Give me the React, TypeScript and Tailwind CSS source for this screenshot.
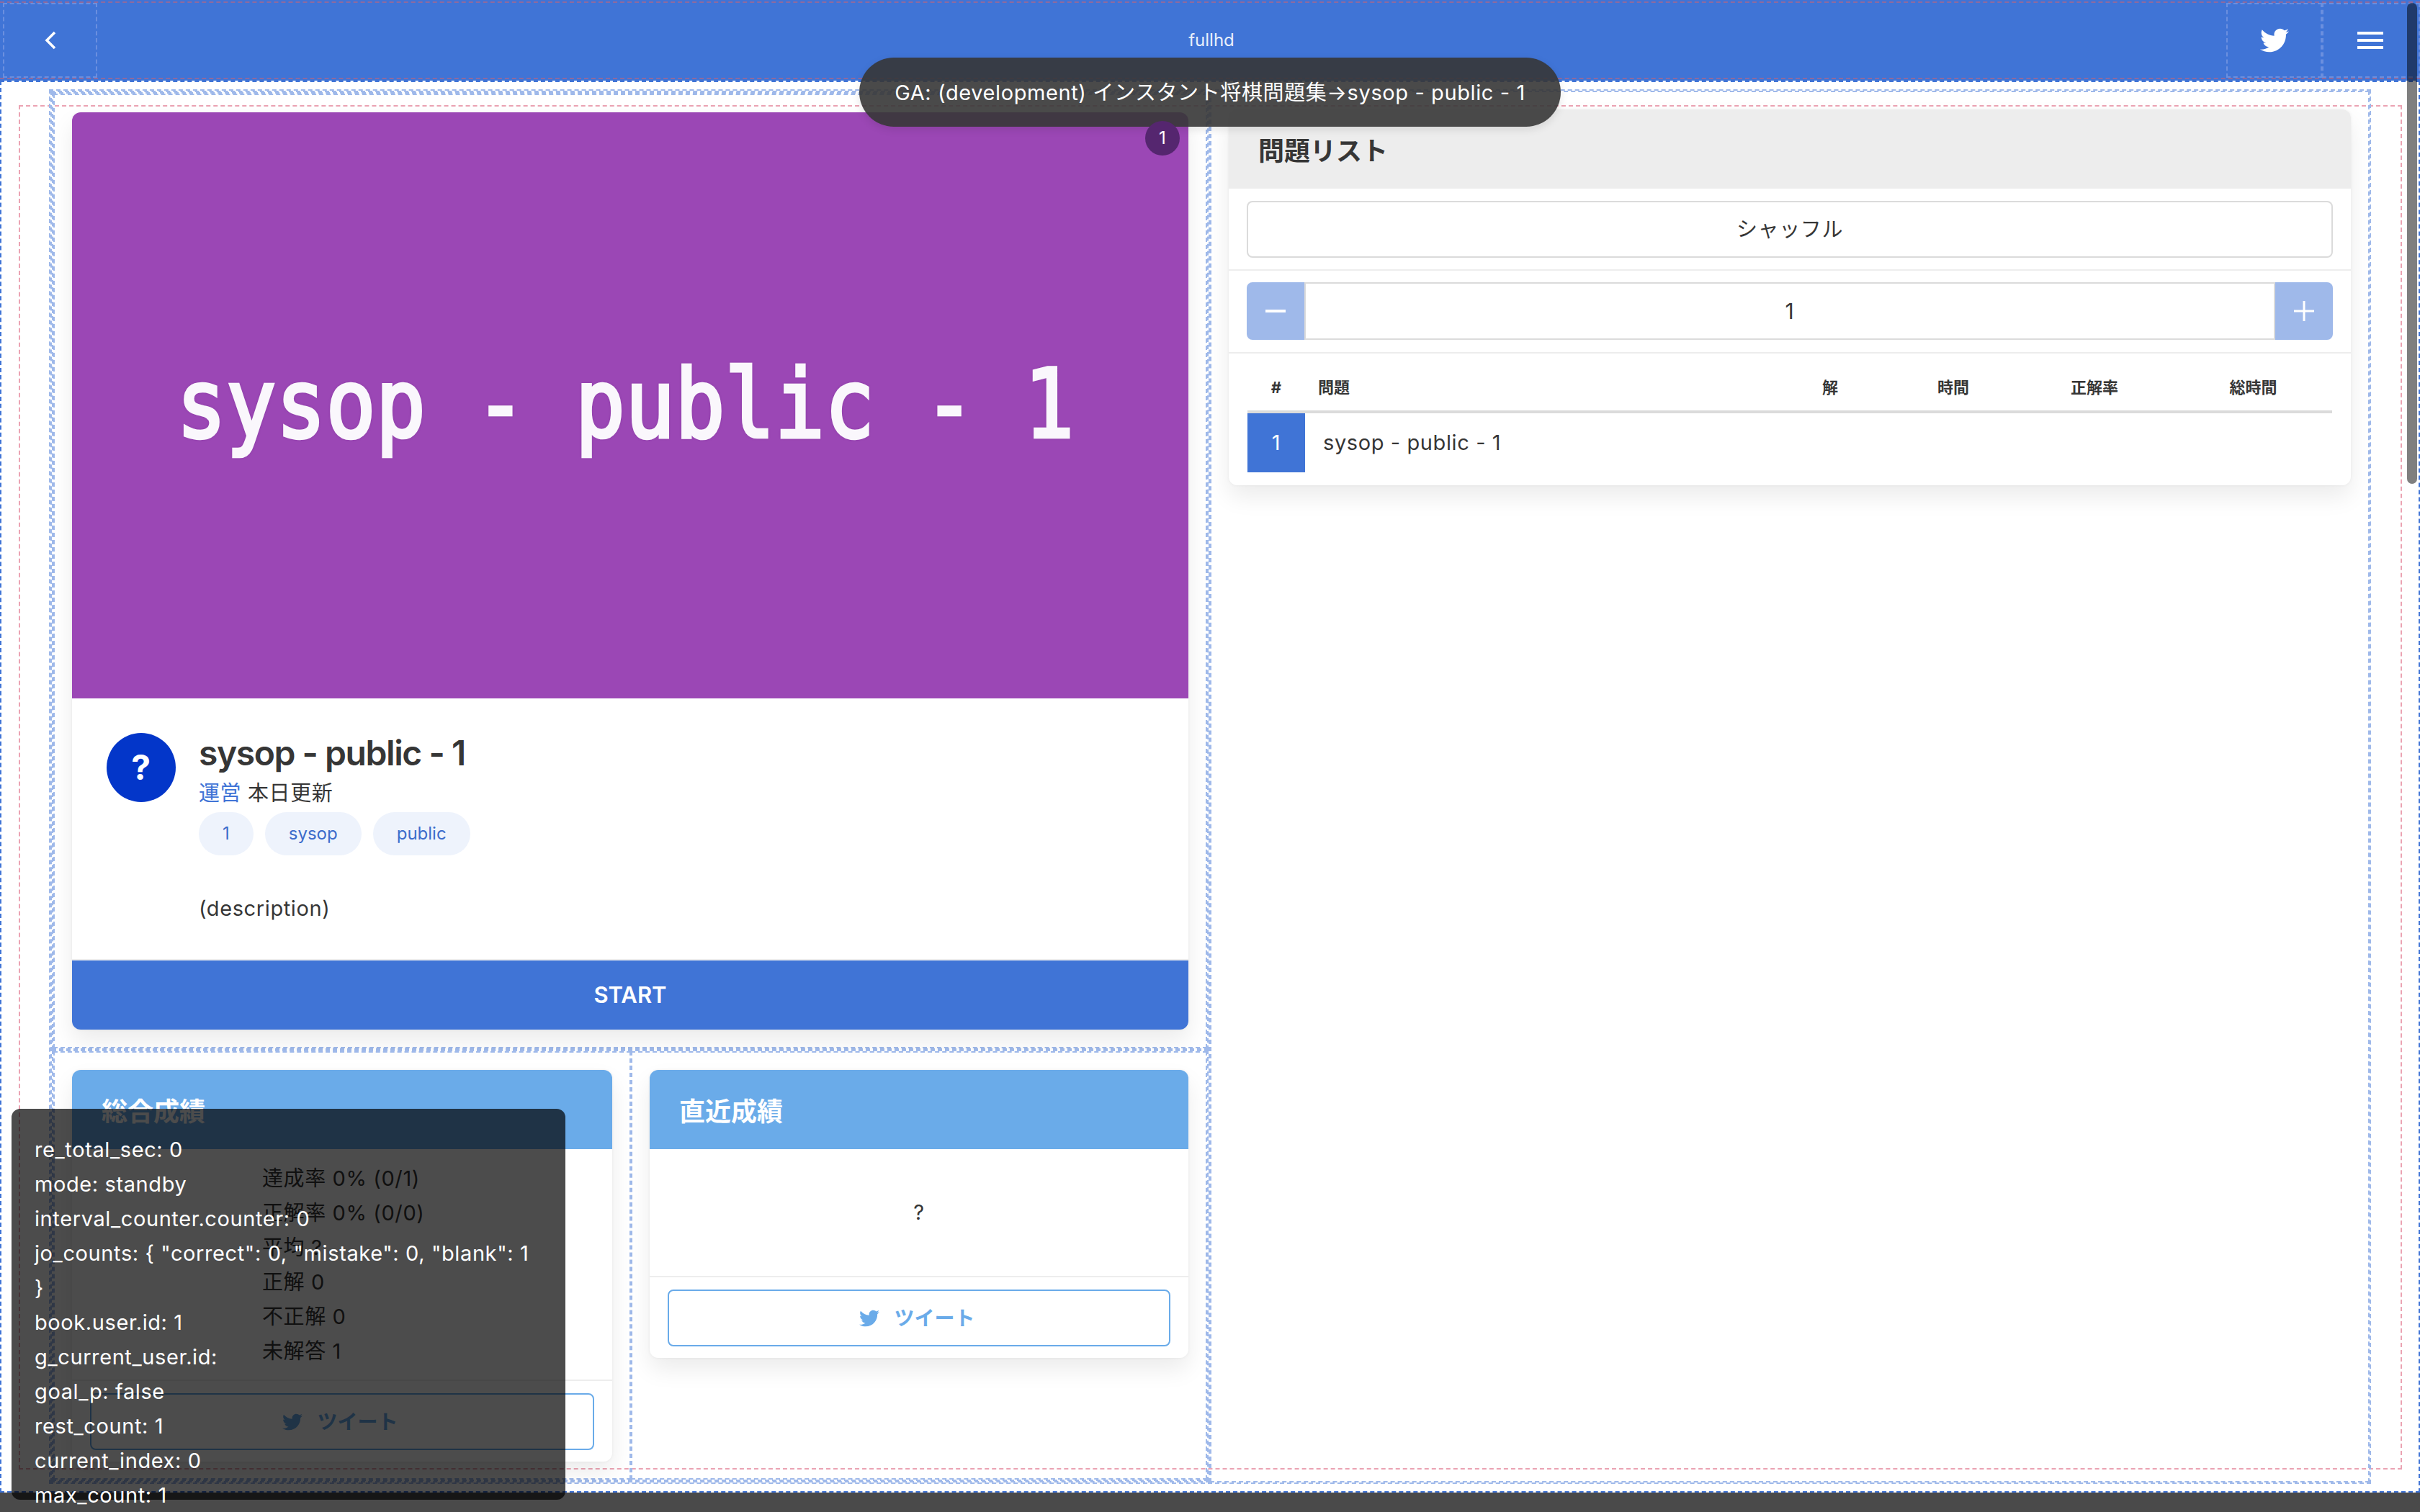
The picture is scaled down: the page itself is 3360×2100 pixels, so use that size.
import { FaTwitter } from "react-icons/fa";

const DEBUG = [
  "re_total_sec: 0",
  "mode: standby",
  "interval_counter.counter: 0",
  'jo_counts: { "correct": 0, "mistake": 0, "blank": 1 }',
  "book.user.id: 1",
  "g_current_user.id:",
  "goal_p: false",
  "rest_count: 1",
  "current_index: 0",
  "max_count: 1",
];

const STATS = ["達成率 0% (0/1)", "正解率 0% (0/0)", "平均 ?", "正解 0", "不正解 0", "未解答 1"];

function TweetFooter() {
  return (
    <div className="h-[114px] border-t-2 border-[#ededed] px-[25px] pt-[17px]">
      <div className="flex h-[79px] items-center justify-center gap-[20px] rounded-[8px] border-2 border-[#6aabe9] pr-[5px] text-[28px] font-bold tracking-normal text-[#6aabe9]">
        <FaTwitter className="h-[28px] w-[28px]" />
        <span>ツイート</span>
      </div>
    </div>
  );
}

function StatCard({ title, children }: { title: string; children: React.ReactNode }) {
  return (
    <div className="overflow-hidden rounded-[12px] bg-white shadow-[0_16px_32px_rgba(0,0,0,0.08),0_0_4px_rgba(0,0,0,0.06)]">
      <div className="flex h-[110px] items-center bg-[#6aabe9] pl-[41px] pt-[5px] text-[36px] font-bold tracking-normal text-white">{title}</div>
      {children}
    </div>
  );
}

export default function App() {
  return (
    <div className="relative flex h-[2100px] w-[3360px] flex-col overflow-hidden bg-[#4a4a4a] font-['Inter','Noto_Sans_CJK_JP',sans-serif] text-[29px] tracking-[0.6px] text-[#363636]">
      {/* navbar */}
      <header className="h-[112px] shrink-0 bg-[#4074d6] py-[2px]">
        <div className="flex h-[108px] items-stretch border-y-2 border-dashed border-[#8e6a9f]">
          <div className="flex flex-1 pl-[4px]">
            <div className="flex w-[131px] items-center justify-center border-2 border-dashed border-[#6b8fdf]">
              <svg width="16" height="26" viewBox="0 0 16 26" fill="none" stroke="white" strokeWidth="3.5">
                <path d="M14 2 L3 13 L14 24" />
              </svg>
            </div>
          </div>
          <div className="flex items-center text-[24px] tracking-normal text-[#e8eefa]">fullhd</div>
          <div className="flex flex-1 justify-end">
            <div className="flex w-[133px] items-center justify-center border-2 border-dashed border-[#6b8fdf]">
              <FaTwitter className="h-[40px] w-[40px] text-white" />
            </div>
            <div className="flex w-[136px] flex-col items-center justify-center gap-[6px] border-2 border-dashed border-[#6b8fdf] pr-[2px]">
              <span className="h-[4px] w-[36px] bg-white" />
              <span className="h-[4px] w-[36px] bg-white" />
              <span className="h-[4px] w-[36px] bg-white" />
            </div>
          </div>
        </div>
      </header>

      {/* page */}
      <main className="shrink-0 border-2 border-dashed border-[#4074d6] bg-white pb-[30px] pl-[24px] pr-[23px] pt-[32px]">
        <section className="border-2 border-dashed border-[#eba3b3]">
          <div className="ml-[40px] mr-[41px] mt-[-24px] mb-[-22px] flex border-2 border-dashed border-[#9fb9ea]">
            {/* left column */}
            <div className="w-[1610px] shrink-0 border-2 border-dashed border-[#9fb9ea]">
              <div className="border-2 border-dashed border-[#9fb9ea]">
                <div className="border-2 border-dashed border-[#9fb9ea] p-[24px]">
                  <div className="overflow-hidden rounded-[12px] bg-white shadow-[0_16px_32px_rgba(0,0,0,0.08),0_0_4px_rgba(0,0,0,0.06)]">
                    <div className="flex h-[814px] items-center justify-center bg-[#9b47b5]">
                      <span className="mr-[14px] mt-[-4px] scale-y-[1.14] font-['DejaVu_Sans_Mono',monospace] text-[115px] tracking-normal text-[#faf7fc] [-webkit-text-stroke:4px_#faf7fc] [text-shadow:0_0_4px_rgba(80,20,100,0.5)]">
                        sysop - public - 1
                      </span>
                    </div>
                    <div className="flex h-[362px] gap-[32px] pl-[48px] pt-[48px]">
                      <div className="flex h-[96px] w-[96px] items-center justify-center rounded-full bg-[#0336c9] text-[48px] font-bold text-white">?</div>
                      <div>
                        <div className="mb-[6px] mt-[-2px] text-[48px] font-semibold leading-[60px] tracking-[-1.45px]">sysop - public - 1</div>
                        <div className="mb-[6px] leading-[40px]">
                          <span className="text-[#4074d6]">運営</span> 本日更新
                        </div>
                        <div className="flex gap-[16px]">
                          {["1", "sysop", "public"].map((t) => (
                            <span key={t} className="flex h-[60px] items-center rounded-[30px] bg-[#eef3fc] px-[33px] text-[24px] tracking-normal text-[#3c6ccb]">
                              {t}
                            </span>
                          ))}
                        </div>
                        <div className="mt-[54px] leading-[40px]">(description)</div>
                      </div>
                    </div>
                    <div className="flex h-[98px] items-center justify-center border-t-2 border-[#ededed] bg-[#4074d6] text-[31px] font-semibold tracking-normal text-white">START</div>
                  </div>
                </div>
              </div>
              <div className="flex items-start border-2 border-dashed border-[#9fb9ea]">
                <div className="w-[802px] shrink-0 border-2 border-dashed border-[#9fb9ea] px-[24px] pb-[23px] pt-[24px]">
                  <StatCard title="総合成績">
                    <div className="h-[320px] pl-[264px] pt-[17px] leading-[48px]">
                      {STATS.map((s) => (
                        <div key={s}>{s}</div>
                      ))}
                    </div>
                    <TweetFooter />
                  </StatCard>
                </div>
                <div className="min-w-0 flex-1 self-stretch border-2 border-dashed border-[#9fb9ea] px-[24px] pt-[24px]">
                  <StatCard title="直近成績">
                    <div className="flex h-[176px] items-center justify-center">?</div>
                    <TweetFooter />
                  </StatCard>
                </div>
              </div>
            </div>
            {/* right column */}
            <div className="min-w-0 flex-1 border-2 border-dashed border-[#9fb9ea] p-[24px]">
              <div className="overflow-hidden rounded-[12px] bg-white shadow-[0_16px_32px_rgba(0,0,0,0.08),0_0_4px_rgba(0,0,0,0.06)]">
                <div className="flex h-[110px] items-center bg-[#ededed] pl-[41px] pt-[5px] text-[36px] font-bold tracking-normal">問題リスト</div>
                <div className="h-[114px] border-b-2 border-[#ededed] px-[25px] pt-[17px]">
                  <div className="flex h-[79px] items-center justify-center rounded-[8px] border-2 border-[#dbdbdb]">シャッフル</div>
                </div>
                <div className="h-[115px] border-b-2 border-[#ededed] px-[25px] pt-[16px]">
                  <div className="flex h-[80px]">
                    <div className="flex w-[80px] items-center justify-center rounded-l-[8px] bg-[#9fb9ea]">
                      <svg width="28" height="28" viewBox="0 0 28 28" fill="white"><rect x="0" y="12" width="28" height="4" /></svg>
                    </div>
                    <div className="flex flex-1 items-center justify-center border-2 border-[#dbdbdb] text-[30px]">1</div>
                    <div className="flex w-[80px] items-center justify-center rounded-r-[8px] bg-[#9fb9ea]">
                      <svg width="28" height="28" viewBox="0 0 28 28" fill="white"><rect x="0" y="12.5" width="28" height="3" /><rect x="12.5" y="0" width="3" height="28" /></svg>
                    </div>
                  </div>
                </div>
                <table className="ml-[26px] w-[1506px] table-fixed border-collapse">
                  <colgroup>
                    <col className="w-[80px]" />
                    <col className="w-[646px]" />
                    <col className="w-[166px]" />
                    <col className="w-[176px]" />
                    <col className="w-[216px]" />
                    <col className="w-[222px]" />
                  </colgroup>
                  <thead>
                    <tr className="h-[81px] border-b-4 border-[#dbdbdb] text-center text-[22px] font-bold tracking-normal">
                      <th className="pt-[16px]">#</th>
                      <th className="pl-[18px] pt-[16px] text-left">問題</th>
                      <th className="pt-[16px]">解</th>
                      <th className="pt-[16px]">時間</th>
                      <th className="pt-[16px]">正解率</th>
                      <th className="pl-[3px] pt-[16px]">総時間</th>
                    </tr>
                  </thead>
                  <tbody>
                    <tr className="h-[84px]">
                      <td className="bg-[#4074d6] text-center text-white">1</td>
                      <td className="pl-[25px]">sysop - public - 1</td>
                      <td />
                      <td />
                      <td />
                      <td />
                    </tr>
                  </tbody>
                </table>
                <div className="h-[18px]" />
              </div>
            </div>
          </div>
        </section>
      </main>

      {/* overlays */}
      <div className="absolute left-[1193px] top-[80px] flex h-[96px] w-[974px] items-center justify-center rounded-[48px] bg-[rgba(54,54,54,0.9)] pt-[2px] text-white shadow-[0_4px_12px_rgba(0,0,0,0.1)]">
        GA: (development) インスタント将棋問題集→sysop - public - 1
      </div>
      <div className="absolute left-[1590px] top-[168px] flex h-[48px] w-[48px] items-center justify-center rounded-full bg-[#55266f] text-[24px] tracking-normal text-white">1</div>
      <div className="absolute left-[16px] top-[1540px] h-[543px] w-[769px] rounded-[12px] bg-[rgba(0,0,0,0.7)] px-[32px] pt-[33px] leading-[48px] text-white">
        {DEBUG.map((d) => (
          <div key={d}>{d}</div>
        ))}
      </div>
      <div className="absolute left-[3342px] top-[4px] h-[668px] w-[14px] rounded-[7px] bg-[rgba(0,0,0,0.5)]" />
    </div>
  );
}
